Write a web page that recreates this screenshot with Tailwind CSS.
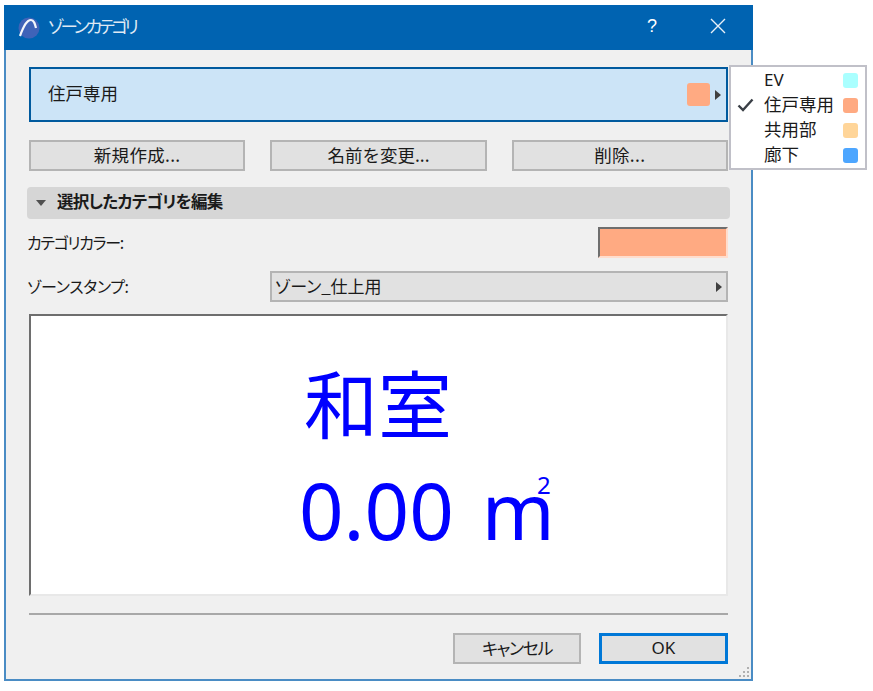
<!DOCTYPE html>
<html lang="ja">
<head>
    <meta charset="UTF-8">
    <title>ゾーンカテゴリ</title>
    <script src="https://cdn.jsdelivr.net/npm/@tailwindcss/browser@4"></script>
</head>
<body class="bg-white w-[873px] h-[691px] overflow-hidden font-['Noto_Sans_CJK_JP','Noto_Sans',sans-serif] text-[17px] text-[#1a1a1a]">
    <div class="relative ml-[4px] mt-[5px] w-[749px] h-[676px] bg-[#f0f0f0] border-2 border-t-0 border-[#4a8cc4] flex flex-col">
        <!-- barra de titulo -->
        <div class="h-[45px] -mx-[2px] bg-[#0063b1] flex items-center pl-[14px] text-[#dfe9f4] shrink-0">
            <svg class="w-[22px] h-[22px] shrink-0" viewBox="0 0 22 22">
                <circle cx="11" cy="11" r="10.5" fill="#3f63b8"/>
                <path d="M2 19 C6 8 9 3 13 3 C16 3 17 7 18 11" fill="none" stroke="#f4f6fb" stroke-width="2.2"/>
            </svg>
            <span class="ml-[8px] [font-feature-settings:'palt'] tracking-[-3.3px] text-[17.5px] leading-none pb-[3px]">ゾーンカテゴリ</span>
            <span class="ml-auto mr-[53px] text-[18px] text-white font-['Liberation_Sans'] pb-[3px]">?</span>
            <svg class="w-[16px] h-[16px] mr-[27px] mb-[3px]" viewBox="0 0 16 16">
                <path d="M1 1 L15 15 M15 1 L1 15" stroke="#e8f0f8" stroke-width="1.4" fill="none"/>
            </svg>
        </div>

        <div class="flex-1 flex flex-col pl-[23px] pr-[23px] pt-[17px]">
            <!-- categoria seleccionada -->
            <div class="h-[55px] bg-[#cce4f7] border-2 border-[#005a9e] flex items-center pl-[17px] pr-[5px] shrink-0">
                <span class="text-[17.5px] pb-[3px]">住戸専用</span>
                <span class="ml-auto w-[23px] h-[23px] rounded-[3px] bg-[#ffaa82]"></span>
                <span class="ml-[5px] w-0 h-0 border-y-[5px] border-y-transparent border-l-[6px] border-l-[#404040]"></span>
            </div>

            <div class="mt-[18px] grid grid-cols-3 gap-[25px] shrink-0">
                <button class="h-[31px] bg-[#e1e1e1] border-2 border-[#b4b4b4] leading-none pb-[2px] text-[17.5px] tracking-[0.3px]">新規作成...</button>
                <button class="h-[31px] bg-[#e1e1e1] border-2 border-[#b4b4b4] leading-none pb-[2px] text-[17.5px]">名前を変更...</button>
                <button class="h-[31px] bg-[#e1e1e1] border-2 border-[#b4b4b4] leading-none pb-[2px] text-[17.5px] tracking-[0.3px]">削除...</button>
            </div>

            <div class="mt-[16px] -mx-[2px] h-[32px] rounded-[4px] bg-[#d6d6d6] flex items-center pl-[9px] font-bold shrink-0">
                <span class="w-0 h-0 border-x-[5px] border-x-transparent border-t-[6px] border-t-[#505050]"></span>
                <span class="ml-[11px] pb-[3px] text-[16.5px] [font-feature-settings:'palt'] tracking-[-0.7px]">選択したカテゴリを編集</span>
            </div>

            <div class="mt-[8px] h-[31px] flex items-center justify-between -ml-[2px] shrink-0">
                <span class="pb-[2px] [font-feature-settings:'palt'] tracking-[-1.3px] text-[16px]">カテゴリカラー:</span>
                <span class="w-[130px] h-[31px] bg-[#ffaa82] border-2 border-[#6e6e6e] border-r-white/60 border-b-white/60"></span>
            </div>

            <div class="mt-[13px] h-[31px] flex items-center -ml-[2px] shrink-0">
                <span class="w-[243px] pb-[2px] [font-feature-settings:'palt'] tracking-[-0.4px] text-[16px]">ゾーンスタンプ:</span>
                <div class="flex-1 h-[31px] bg-[#e1e1e1] border-2 border-[#b4b4b4] flex items-center pl-[3px] pr-[4px]">
                    <span class="pb-[2px] [font-feature-settings:'palt'] tracking-[-0.1px]">ゾーン_仕上用</span>
                    <span class="ml-auto w-0 h-0 border-y-[5px] border-y-transparent border-l-[6px] border-l-[#404040]"></span>
                </div>
            </div>

            <!-- vista previa del sello -->
            <div class="mt-[12px] h-[282px] bg-white border-2 border-[#6e6e6e] border-r-[#e8e8e8] border-b-[#e8e8e8] text-[#0000ff] flex flex-col items-start pl-[269px] shrink-0">
                <span class="mt-[35px] ml-[4px] text-[74px] leading-[100px] [font-feature-settings:'palt']">和室</span>
                <span class="-ml-[1px] mt-[9px] text-[78px] leading-[100px] font-['Noto_Sans'] flex"><span>0.00</span><span class="relative ml-[28px]">m<span class="absolute right-[4px] top-[13px] text-[24px] leading-none">2</span></span></span>
            </div>

            <div class="mt-[17px] h-[2px] bg-[#a8a8a8] shrink-0"></div>

            <div class="mt-[18px] flex justify-end gap-[18px] shrink-0">
                <button class="w-[128px] h-[31px] bg-[#e1e1e1] border-2 border-[#b4b4b4] leading-none pb-[2px] [font-feature-settings:'palt'] tracking-[-1.4px]">キャンセル</button>
                <button class="w-[129px] h-[31px] bg-[#e1e1e1] border-[3px] border-[#0078d7] leading-none pb-[2px] font-['Noto_Sans']">OK</button>
            </div>
        </div>

        <!-- agarre de redimension -->
        <svg class="absolute right-[1px] bottom-[1px] w-[12px] h-[12px]" viewBox="0 0 12 12" fill="#b0b0b0">
            <rect x="9" y="1" width="2" height="2"/><rect x="5" y="5" width="2" height="2"/><rect x="9" y="5" width="2" height="2"/>
            <rect x="1" y="9" width="2" height="2"/><rect x="5" y="9" width="2" height="2"/><rect x="9" y="9" width="2" height="2"/>
        </svg>

        <!-- menu desplegable -->
        <div class="absolute left-[723px] top-[60px] w-[138px] h-[105px] bg-white border-2 border-[#c0c0c8] flex flex-col text-[17.5px]">
            <div class="h-[25px] mt-[1px] flex items-center pl-[33px] pr-[7px]"><span class="font-['Noto_Sans'] pb-[2px] text-[17px]">EV</span><span class="ml-auto w-[15px] h-[15px] rounded-[3px] bg-[#aaffff]"></span></div>
            <div class="relative h-[25px] flex items-center pl-[33px] pr-[7px]">
                <svg class="absolute left-[6px] top-[5px] w-[17px] h-[14px]" viewBox="0 0 17 14"><path d="M1.5 7.5 L6 12 L15.5 1.5" fill="none" stroke="#3a3f46" stroke-width="2.4"/></svg>
                <span class="pb-[2px]">住戸専用</span><span class="ml-auto w-[15px] h-[15px] rounded-[3px] bg-[#ffaa82]"></span>
            </div>
            <div class="h-[25px] flex items-center pl-[33px] pr-[7px]"><span class="pb-[2px]">共用部</span><span class="ml-auto w-[15px] h-[15px] rounded-[3px] bg-[#ffd599]"></span></div>
            <div class="h-[25px] flex items-center pl-[33px] pr-[7px]"><span class="pb-[2px]">廊下</span><span class="ml-auto w-[15px] h-[15px] rounded-[3px] bg-[#4da6ff]"></span></div>
        </div>
    </div>
</body>
</html>
